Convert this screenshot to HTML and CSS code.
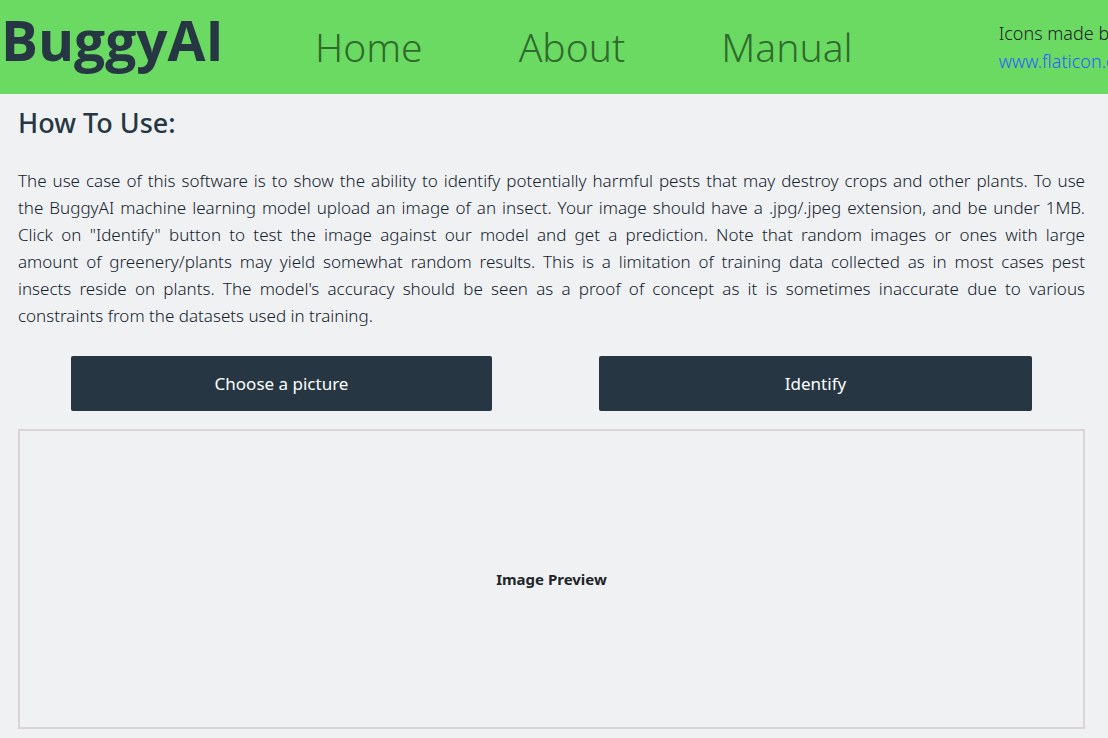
FILE: index.html
```html
<!DOCTYPE html>
<html lang="en">
<head>
<meta charset="utf-8">
<meta name="viewport" content="width=device-width, initial-scale=1">
<title>BuggyAI</title>
<link rel="stylesheet" href="styles.css">
</head>
<body>
<header class="header">
  <span class="brand">BuggyAI</span>
  <nav class="nav">
    <a class="nav-link" href="#home">Home</a>
    <a class="nav-link" href="#about">About</a>
    <a class="nav-link" href="#manual">Manual</a>
  </nav>
  <div class="credits">Icons made by<br><a class="credits-link" href="#icons">www.flaticon.com</a></div>
</header>
<main class="main">
  <h1 class="title">How To Use:</h1>
  <p class="intro">
    The use case of this software is to show the ability to identify potentially harmful pests that may destroy crops and other plants. To use<br>
    the BuggyAI machine learning model upload an image of an insect. Your image should have a .jpg/.jpeg extension, and be under 1MB.<br>
    Click on "Identify" button to test the image against our model and get a prediction. Note that random images or ones with large<br>
    amount of greenery/plants may yield somewhat random results. This is a limitation of training data collected as in most cases pest<br>
    insects reside on plants. The model's accuracy should be seen as a proof of concept as it is sometimes inaccurate due to various<br>
    <span class="intro-end">constraints from the datasets used in training.</span>
  </p>
  <div class="actions">
    <button class="button" type="button">Choose a picture</button>
    <button class="button" type="button">Identify</button>
  </div>
  <section class="preview">Image Preview</section>
</main>
</body>
</html>
```
FILE: styles.css
```css
* {
  box-sizing: border-box;
}

body {
  margin: 0;
  background: #eff1f3;
  color: #263743;
  font-family: "Noto Sans", sans-serif;
  font-size: 17px;
  line-height: 27px;
}

.header {
  display: flex;
  align-items: center;
  height: 94px;
  overflow: hidden;
  background: #6bda63;
  white-space: nowrap;
}

.brand {
  flex: none;
  width: 315px;
  padding: 0 0 14px 1px;
  font-family: "Open Sans", sans-serif;
  font-size: 55px;
  font-weight: 700;
  line-height: 80px;
}

.nav {
  display: flex;
  flex: none;
  gap: 96px;
}

.nav-link {
  color: #2f6b2c;
  font-size: 39px;
  font-weight: 300;
  line-height: 56px;
  text-decoration: none;
}

.credits {
  flex: none;
  margin-left: 146px;
  color: #212529;
  font-size: 18px;
  font-weight: 300;
  line-height: 28px;
}

.credits-link {
  color: #2b5dff;
  text-decoration: none;
}

.main {
  padding: 11px 23px 9px 18px;
}

.title {
  margin: 0 0 26px;
  font-size: 27px;
  font-weight: 500;
  line-height: 36px;
}

.intro {
  margin: 0;
  color: #14222d;
  font-weight: 300;
  text-align: justify;
  text-align-last: justify;
}

.intro-end {
  display: block;
  text-align-last: left;
}

.actions {
  display: grid;
  grid-template-columns: 421fr 433fr;
  gap: 107px;
  padding: 27px 53px 18px;
}

.button {
  height: 55px;
  border: 0;
  border-radius: 2px;
  background: #263743;
  color: #fff;
  font: inherit;
}

.preview {
  display: flex;
  align-items: center;
  justify-content: center;
  min-height: 300px;
  border: 2px solid #dcd3d8;
  color: #212529;
  font-size: 15px;
  font-weight: 700;
}
```
